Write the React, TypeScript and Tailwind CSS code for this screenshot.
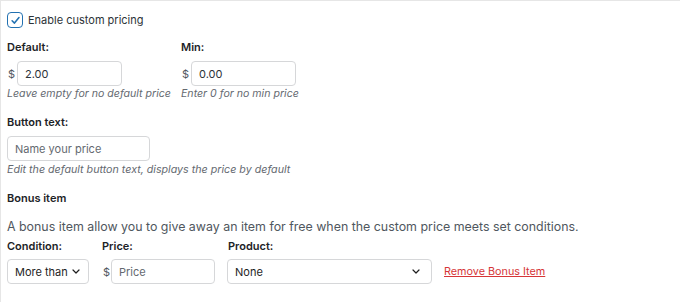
import { useState } from 'react';

function Chevron() {
  return (
    <svg width="8" height="5" viewBox="0 0 8 5" fill="none" className="shrink-0">
      <path d="M1 1 4 4 7 1" stroke="#1e1e1e" strokeWidth="1.2" strokeLinecap="round" strokeLinejoin="round" />
    </svg>
  );
}

const inputCls =
  'h-[25px] rounded-[4px] border border-[#d6d7d9] bg-white px-[7px] text-[11px] leading-[16px] text-[#2c3338] outline-none placeholder:text-[#646970]';

export default function App() {
  const [enabled, setEnabled] = useState(true);

  return (
    <div
      className="min-h-[302px] w-[680px] border-t border-l border-[#e6e6e6] bg-white pl-[6px] pt-[11px] text-[11px] leading-[16px] text-[#2c3338]"
      style={{ fontFamily: 'Inter, "Noto Sans", sans-serif' }}
    >
      {/* Enable */}
      <label className="flex h-[16px] items-center gap-[5px]">
        <button
          type="button"
          onClick={() => setEnabled(!enabled)}
          className="flex h-[16px] w-[16px] items-center justify-center rounded-[4px] border-[1.5px] border-[#2271b1] bg-white"
        >
          {enabled && (
            <svg width="11" height="11" viewBox="0 0 12 12" fill="none">
              <path d="M2.3 6.3 4.9 8.8 9.8 2.8" stroke="#2271b1" strokeWidth="1.7" strokeLinecap="round" strokeLinejoin="round" />
            </svg>
          )}
        </button>
        <span>Enable custom pricing</span>
      </label>

      {/* Default / Min */}
      <div className="mt-[11px] flex">
        <div className="w-[174px]">
          <div className="font-semibold text-[#1d2327]">Default:</div>
          <div className="mt-[6px] flex items-center gap-[2px]">
            <span className="w-[8px] pl-[1px] text-[#50575e]">$</span>
            <input type="text" defaultValue="2.00" className={`${inputCls} w-[105px]`} />
          </div>
          <div className="whitespace-nowrap text-[10.6px] italic text-[#646970]">Leave empty for no default price</div>
        </div>
        <div>
          <div className="font-semibold text-[#1d2327]">Min:</div>
          <div className="mt-[6px] flex items-center gap-[2px]">
            <span className="w-[8px] pl-[1px] text-[#50575e]">$</span>
            <input type="text" defaultValue="0.00" className={`${inputCls} w-[105px]`} />
          </div>
          <div className="text-[10.6px] italic text-[#646970]">Enter 0 for no min price</div>
        </div>
      </div>

      {/* Button text */}
      <div className="mt-[12px] font-semibold text-[#1d2327]">Button text:</div>
      <input type="text" placeholder="Name your price" className={`${inputCls} mt-[6px] block w-[143px]`} />
      <div className="mt-[1px] text-[10.7px] italic text-[#646970]">Edit the default button text, displays the price by default</div>

      {/* Bonus item */}
      <div className="mt-[12px] font-semibold text-[#1d2327]">Bonus item</div>
      <p className="mt-[13px] text-[12.4px] text-[#50575e]">
        A bonus item allow you to give away an item for free when the custom price meets set conditions.
      </p>

      <div className="mt-[3px] flex">
        <div className="w-[95px]">
          <div className="font-semibold text-[#1d2327]">Condition:</div>
          <div className="mt-[5px] flex h-[25px] w-[82px] items-center justify-between rounded-[4px] border border-[#d6d7d9] bg-white pl-[7px] pr-[8px] text-[#1e1e1e]">
            <span>More than</span>
            <Chevron />
          </div>
        </div>
        <div className="w-[125px]">
          <div className="font-semibold text-[#1d2327]">Price:</div>
          <div className="mt-[5px] flex items-center gap-[2px]">
            <span className="w-[7px] pl-[1px] text-[#50575e]">$</span>
            <input type="text" placeholder="Price" className={`${inputCls} w-[104px]`} />
          </div>
        </div>
        <div>
          <div className="pl-[1px] font-semibold text-[#1d2327]">Product:</div>
          <div className="mt-[5px] flex items-center gap-[12px]">
            <div className="flex h-[25px] w-[205px] items-center justify-between rounded-[4px] border border-[#d6d7d9] bg-white pl-[7px] pr-[11px] text-[#1e1e1e]">
              <span>None</span>
              <Chevron />
            </div>
            <a href="#" className="text-[10.8px] text-[#d63638] underline">Remove Bonus Item</a>
          </div>
        </div>
      </div>
    </div>
  );
}
